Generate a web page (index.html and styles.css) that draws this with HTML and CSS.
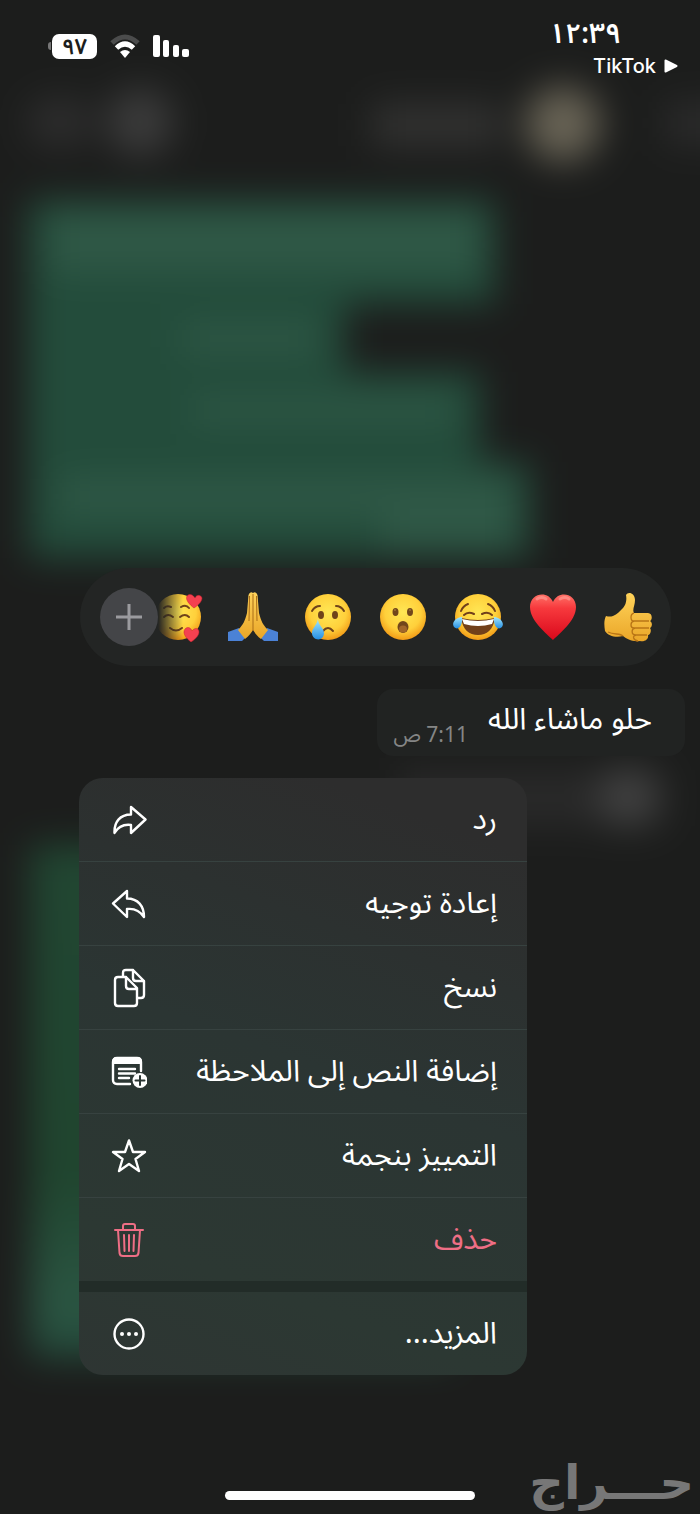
FILE: index.html
```
<!DOCTYPE html>
<html lang="ar" dir="rtl">
<head>
<meta charset="utf-8">
<meta name="viewport" content="width=device-width, initial-scale=1">
<title>محادثة</title>
<link rel="stylesheet" href="styles.css">
</head>
<body>
<svg class="backdrop" viewBox="0 0 700 1514" preserveAspectRatio="none" aria-hidden="true">
  <defs>
    <filter id="soft" filterUnits="userSpaceOnUse" x="-80" y="-80" width="860" height="1674" color-interpolation-filters="sRGB"><feGaussianBlur stdDeviation="18"/></filter>
    <linearGradient id="lower" x1="0" y1="0" x2="0" y2="1"><stop offset="0" stop-color="#214632"/><stop offset=".65" stop-color="#20452f"/><stop offset=".9" stop-color="#2b5643"/><stop offset="1" stop-color="#23493a"/></linearGradient>
  </defs>
  <g filter="url(#soft)">
    <path fill="#1c1d1c" d="M-80-80H780V1594H-80Z"/>
    <path fill="#234c3b" d="M28 200H495V304H345V372H480V462H530V558H28Z"/>
    <path fill="#2f5846" d="M50 212H480V272H50ZM180 325H318V352H180ZM190 398H455V422H190ZM60 478H515V515H60ZM380 500H515V550H380Z"/>
    <path fill="url(#lower)" d="M30 845H450V1358H30Z"/>
    <ellipse cx="60" cy="122" rx="34" ry="26" fill="#2d2d2d"/>
    <circle cx="140" cy="122" r="34" fill="#3b3b3b"/>
    <rect x="372" y="104" width="130" height="42" fill="#323231"/>
    <circle cx="563" cy="124" r="38" fill="#686355"/>
    <rect x="665" y="102" width="115" height="42" fill="#2b2b2b"/>
    <rect x="400" y="770" width="265" height="56" fill="#292929"/>
    <circle cx="628" cy="797" r="30" fill="#414141"/>
  </g>
</svg>

<header class="status">
  <div class="clock">
    <time class="time">١٢:٣٩</time>
    <a class="back" href="#tiktok"><svg width="14" height="14" viewBox="0 0 14 14" aria-hidden="true"><path d="M1.500 1.500 12.500 7 1.500 12.500Z" fill="#fff" stroke="#fff" stroke-width="2" stroke-linejoin="round"/></svg><span>TikTok</span></a>
  </div>
  <div class="indicators">
    <svg width="36" height="24" viewBox="0 0 36 24" aria-label="الإشارة"><g fill="#fff"><rect x="0" y="1" width="7" height="22" rx="2"/><rect x="10" y="6" width="6" height="17" rx="2"/><rect x="20" y="11" width="6" height="12" rx="2"/><rect x="29" y="15" width="7" height="8" rx="2"/></g></svg>
    <svg width="30" height="24" viewBox="0 0 30 24" aria-label="واي فاي"><g fill="none" stroke-width="5"><path stroke="#4b4c4c" d="M2 9Q15-3 28 9"/><path stroke="#fff" d="M6.500 14Q15 6 23.500 14"/></g><path fill="#fff" d="M10 18Q15 14 20 18L15 24Z"/></svg>
    <div class="battery"><span class="level">٩٧</span><i class="nub"></i></div>
  </div>
</header>

<main class="stage">
  <div class="reactions">
    <button class="emoji" aria-label="إعجاب"><svg viewBox="0 0 50 50">
      <defs><linearGradient id="skin" x1="0" y1="0" x2="0" y2="1"><stop offset="0" stop-color="#ffd35a"/><stop offset="1" stop-color="#eaa628"/></linearGradient></defs>
      <path fill="url(#skin)" d="M23 3C25-1 32 1 32 8C32 14 29 17 31 21H45C49 21 50 27 47 29C50 31 49 35 47 36C49 39 47 43 45 43C46 47 42 50 37 49C29 50 24 47 20 44C13 46 5 44 2 39C1 33 1 28 3 24C10 26 14 22 18 18C23 14 24 8 23 3Z"/>
      <path fill="none" stroke="#b97516" stroke-width="1.300" d="M46 29H31C27 29 27 22 31 21M46 36H31C27 36 27 30 31 29M44 43H33C28 43 28 37 32 36M33 43C29 44 30 48 35 49M5 40C11 43 17 41 20 44"/></svg></button>
    <button class="emoji" aria-label="قلب"><svg viewBox="0 0 50 50">
      <defs><linearGradient id="red" x1="0" y1="0" x2="0" y2="1"><stop offset="0" stop-color="#ff7167"/><stop offset=".3" stop-color="#f7393d"/><stop offset="1" stop-color="#d9081b"/></linearGradient></defs>
      <path fill="url(#red)" d="M25 48C19 42 2 29 2 15C2 1 20-2 25 10C30-2 48 1 48 15C48 29 31 42 25 48Z"/><path fill="none" stroke="#ffb0a5" stroke-width="3" stroke-linecap="round" opacity=".5" d="M9 7Q14 4 18 7M32 7Q37 4 41 7"/></svg></button>
    <button class="emoji" aria-label="ضحك"><svg viewBox="0 0 50 50">
      <defs><radialGradient id="face" cx=".5" cy=".4" r=".6"><stop offset="0" stop-color="#ffe755"/><stop offset=".65" stop-color="#ffd03b"/><stop offset="1" stop-color="#f19a16"/></radialGradient><linearGradient id="tear" x1="0" y1="0" x2="0" y2="1"><stop offset="0" stop-color="#a4e8ff"/><stop offset="1" stop-color="#268fe1"/></linearGradient></defs>
      <circle cx="25" cy="25" r="23" fill="url(#face)"/><path fill="none" stroke="#71401b" stroke-width="2" stroke-linecap="round" d="M8 19Q10 14 15 12M35 12Q40 14 42 19M11 23Q15 19 21 22M29 22Q35 19 39 23"/>
      <path fill="#71401a" d="M8 26Q25 30 42 26C40 38 34 43 25 43S10 38 8 26Z"/><path fill="#fff" d="M9 27Q25 31 41 27L39 32Q25 36 11 32Z"/><path fill="url(#tear)" d="M9 25C3 25-2 31 1 35C5 39 10 34 9 25ZM41 25C47 25 52 31 49 35C45 39 40 34 41 25Z"/></svg></button>
    <button class="emoji" aria-label="دهشة"><svg viewBox="0 0 50 50"><circle cx="25" cy="25" r="23" fill="url(#face)"/><g fill="#72461b"><ellipse cx="17.500" cy="20" rx="3" ry="4"/><ellipse cx="32" cy="20" rx="3" ry="4"/><ellipse cx="25" cy="35" rx="5.500" ry="6"/></g><ellipse cx="25" cy="37" rx="4" ry="3.500" fill="#a1662a"/><path stroke="#b18342" stroke-width="1" d="M16 18h2M31 18h2"/></svg></button>
    <button class="emoji" aria-label="حزن"><svg viewBox="0 0 50 50"><circle cx="25" cy="25" r="23" fill="url(#face)"/><g fill="#70431a"><ellipse cx="18" cy="23" rx="3" ry="4"/><ellipse cx="32" cy="23" rx="3" ry="4"/></g><path fill="none" stroke="#70431a" stroke-width="2" stroke-linecap="round" d="M9 19Q12 14 17 14M33 14Q38 14 41 19M20 39Q25 33 30 39"/><path fill="url(#tear)" d="M15 27C15 33 21 36 21 41C21 50 9 49 9 41C9 36 14 33 15 27Z"/></svg></button>
    <button class="emoji" aria-label="دعاء"><svg viewBox="0 0 50 50"><path fill="#4b82d6" d="M0 40L11 36L19 44L14 49H0ZM50 40L39 36L31 44L36 49H50Z"/><path fill="url(#skin)" d="M20.500 3Q22-1 25 1Q28-1 29.500 3L31 21C33 29 35 33 40 38L33 47C29 44 27 41 25 38C23 41 21 44 17 47L10 38C15 33 17 29 19 21Z"/><path fill="none" stroke="#a96c16" stroke-width="1" d="M25 2V39M21.500 4L21 29M28.500 4L29 29"/></svg></button>
    <button class="emoji fading" aria-label="حب"><svg viewBox="0 0 50 50"><circle cx="25" cy="25" r="23" fill="url(#face)"/><path fill="none" stroke="#70431a" stroke-width="2" stroke-linecap="round" d="M11 16Q14 13 18 15M28 15Q33 12 36 16M11 25Q15 21 20 25M27 25Q32 21 36 25M17 36Q23 41 29 36"/><g fill="#f44150" stroke="#c9202e" stroke-width=".500"><path d="M41 16C37 13 32 8 34 4C37 1 40 3 42 6C44 2 48 3 49 6C49 10 44 14 41 16Z"/><path d="M38 50C33 46 29 41 32 37C35 34 38 36 39 39C42 35 46 36 46 40C46 44 41 48 38 50Z"/></g></svg></button>
    <button class="plus" aria-label="المزيد من التفاعلات"><svg width="28" height="28" viewBox="0 0 28 28"><path d="M14 1V27M1 14H27" stroke="#9b9b9f" stroke-width="3"/></svg></button>
  </div>

  <article class="bubble"><p class="message">حلو ماشاء الله</p><time class="sent">7:11 ص</time></article>

  <div class="menu">
    <button class="item"><span class="label">رد</span><svg class="icon" viewBox="0 -2 36 40"><path d="M20 5 34.500 17.500 20 31V23C12 22 7 25 3.500 31C3 20 9 12.500 20 12.500Z"/></svg></button>
    <button class="item"><span class="label">إعادة توجيه</span><svg class="icon" viewBox="0 -2 36 40"><path d="M16 5 2 17.500 16 31V23C24 22 29 25 33 31C33 20 27 12.500 16 12.500Z"/></svg></button>
    <button class="item"><span class="label">نسخ</span><svg class="icon" viewBox="0 -2 36 40"><path d="M12 7V3Q12 0 15 0H22L33 11V25Q33 28 30 28H26M22 0V8Q22 11 25 11H33M7 7H15L26 18V33Q26 36 23 36H7Q4 36 4 33V10Q4 7 7 7ZM15 7V16Q15 19 18 19H26"/></svg></button>
    <button class="item"><span class="label">إضافة النص إلى الملاحظة</span><svg class="icon" viewBox="0 -2 36 40"><path d="M19 30H6Q2 30 2 26V8Q2 4 6 4H26Q30 4 30 8V17M8 15H24M8 19.500H24M8 24H18"/><path class="solid" d="M1 10V8Q1 3 6 3H26Q31 3 31 8V10Z"/><circle class="solid" cx="29" cy="26.500" r="7.500"/><path class="cut" d="M29 22V31M24.500 26.500H33.500"/></svg></button>
    <button class="item"><span class="label">التمييز بنجمة</span><svg class="icon" viewBox="0 -2 36 40"><path d="M18 2.500 22 14H34L24.500 21 28 33 18 26 8 33 11.500 21 2 14H14Z"/></svg></button>
    <button class="item danger"><span class="label">حذف</span><svg class="icon" viewBox="0 -2 36 40"><path d="M4 8H32M12 8V4Q12 2 14 2H22Q24 2 24 4V8M7 8 8.500 31Q9 34 12 34H24Q27 34 27.500 31L29 8M13 13 13.500 29M18 13V29M23 13 22.500 29"/></svg></button>
    <button class="item more"><span class="label">المزيد...</span><svg class="icon" viewBox="0 -2 36 40"><circle cx="18" cy="18" r="14.500"/><g class="solid"><circle cx="11" cy="18" r="2"/><circle cx="18" cy="18" r="2"/><circle cx="25" cy="18" r="2"/></g></svg></button>
  </div>
</main>

<div class="home"></div>
<div class="watermark">حـــراج</div>
</body>
</html>
```
FILE: styles.css
```
* { box-sizing: border-box; }

body {
  position: relative;
  display: flex;
  flex-direction: column;
  min-height: 100vh;
  margin: 0;
  overflow-x: hidden;
  background: #1c1d1c;
  color: #fff;
  font-family: "Noto Sans", "Noto Sans Arabic", "DejaVu Sans", sans-serif;
}

button {
  padding: 0;
  border: 0;
  background: none;
  color: inherit;
  font: inherit;
}

.backdrop {
  position: absolute;
  inset: 0;
  z-index: -1;
  width: 100%;
  height: 100%;
}

.status {
  display: flex;
  justify-content: space-between;
  padding: 14px 22px 0 48px;
}

.clock {
  display: flex;
  flex-direction: column;
}

.time {
  padding-right: 57px;
  font-size: 28px;
  font-weight: 600;
  line-height: 36px;
}

.back {
  display: flex;
  align-items: center;
  gap: 8px;
  color: #fff;
  font: 500 20px/32px "Inter", sans-serif;
  text-decoration: none;
}

.indicators {
  display: flex;
  align-items: center;
  gap: 13px;
  height: 64px;
}

.battery {
  display: flex;
  align-items: center;
  gap: 1px;
}

.level {
  width: 45px;
  height: 25px;
  border-radius: 7px;
  background: #fff;
  color: #1c1d1c;
  font-size: 22px;
  font-weight: 600;
  line-height: 23px;
  text-align: center;
}

.nub {
  width: 3px;
  height: 8px;
  border-radius: 3px 0 0 3px;
  background: #777;
}

.stage {
  display: flex;
  flex-direction: column;
  align-items: flex-start;
  padding: 486px 0 40px;
}

.reactions {
  position: relative;
  display: flex;
  align-items: center;
  gap: 25px;
  height: 98px;
  margin-right: 29px;
  padding: 0 18px 0 73px;
  border-radius: 49px;
  background: #232524;
}

.emoji {
  width: 50px;
  height: 50px;
}

.emoji svg {
  display: block;
}

.fading {
  -webkit-mask-image: linear-gradient(to right, transparent 10%, #000 60%);
  mask-image: linear-gradient(to right, transparent 10%, #000 60%);
}

.plus {
  position: absolute;
  left: 20px;
  display: grid;
  place-items: center;
  width: 58px;
  height: 58px;
  border-radius: 50%;
  background: #444548;
}

.bubble {
  display: flex;
  align-items: flex-end;
  gap: 20px;
  height: 67px;
  margin: 23px 15px 22px 0;
  padding: 0 33px 8px 16px;
  border-radius: 16px;
  background: #212322;
}

.message {
  margin: 0;
  padding-bottom: 10px;
  font-size: 30px;
  line-height: 40px;
}

.sent {
  color: #858686;
  font-size: 21px;
  line-height: 28px;
}

.menu {
  display: flex;
  flex-direction: column;
  width: 64%;
  margin-right: 173px;
  overflow: hidden;
  border-radius: 24px;
  background: linear-gradient(200deg, #2d2d2d 10%, #2b3533 48%, #2c3833 80%, #2e3533);
}

.item {
  display: flex;
  align-items: center;
  justify-content: space-between;
  height: 84px;
  padding: 0 30px 0 32px;
  border-bottom: 1px solid #374240;
  font-size: 30px;
  line-height: 40px;
}

.label {
  padding-bottom: 4px;
}

.danger {
  height: 83px;
  border-bottom: 0;
  color: #ee6e85;
}

.more {
  height: 94px;
  border-top: 11px solid #222c28;
  border-bottom: 0;
}

.icon {
  width: 36px;
  height: 40px;
  fill: none;
  stroke: currentColor;
  stroke-width: 2.4;
  stroke-linecap: round;
  stroke-linejoin: round;
}

.danger .icon {
  stroke-width: 2;
}

.solid {
  fill: currentColor;
  stroke: none;
}

.cut {
  stroke: #2b3633;
  stroke-width: 2;
}

.home {
  width: 250px;
  height: 9px;
  margin: auto auto 14px;
  border-radius: 5px;
  background: #fff;
}

.watermark {
  position: absolute;
  right: 6px;
  bottom: 4px;
  color: #777;
  font: bold 48px/56px "DejaVu Sans", sans-serif;
}
```
